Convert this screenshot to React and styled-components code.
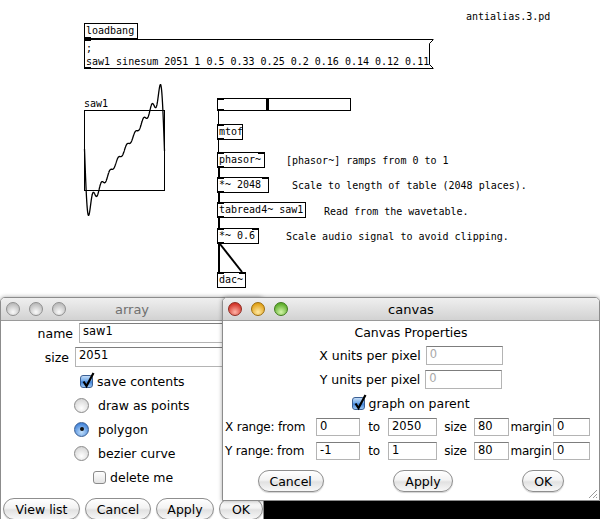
import React from "react";
import styled, { createGlobalStyle } from "styled-components";

const GlobalStyle = createGlobalStyle`
  html, body {
    margin: 0;
    padding: 0;
    background: #000;
  }
  body {
    width: 600px;
    height: 519px;
    overflow: hidden;
  }
`;

const Screen = styled.div`
  position: relative;
  width: 600px;
  height: 519px;
  overflow: hidden;
  background: #000;
`;

/* ---------- Pd patch canvas ---------- */

const Patch = styled.div`
  position: absolute;
  left: 0;
  top: 0;
  width: 600px;
  height: 501px;
  background: #fff;
  font-family: "DejaVu Sans Mono", "Liberation Mono", monospace;
  font-size: 10px;
  color: #000;
`;

const PdBox = styled.div`
  position: absolute;
  left: ${(p) => p.$x}px;
  top: ${(p) => p.$y}px;
  width: ${(p) => p.$w}px;
  height: ${(p) => p.$h || 16}px;
  box-sizing: border-box;
  border: 1px solid #000;
  background: #fff;
  padding-left: 1px;
  line-height: 14px;
  white-space: pre;
`;

const MsgBox = styled(PdBox)`
  border-right: none;
  padding-top: 3px;
  line-height: 12.5px;
`;

const Port = styled.span`
  position: absolute;
  width: 7px;
  height: 2px;
  background: #000;
  ${(p) => (p.$bottom ? "bottom: -1px;" : "top: -1px;")}
  ${(p) => (p.$right ? "right: -1px;" : "left: -1px;")}
`;

const Knob = styled.span`
  position: absolute;
  top: 0;
  bottom: 0;
  left: ${(p) => p.$at}px;
  width: 3px;
  background: #000;
`;

const PdText = styled.div`
  position: absolute;
  left: ${(p) => p.$x}px;
  top: ${(p) => p.$y}px;
  line-height: 14px;
  white-space: pre;
`;

const GraphBox = styled.div`
  position: absolute;
  left: 84px;
  top: 110px;
  width: 81px;
  height: 81px;
  box-sizing: border-box;
  border: 1px solid #000;
`;

const Overlay = styled.svg`
  position: absolute;
  left: 0;
  top: 0;
  pointer-events: none;
`;

/* ---------- Aqua dialog windows ---------- */

const Window = styled.div`
  position: absolute;
  left: ${(p) => p.$x}px;
  top: ${(p) => p.$y}px;
  width: ${(p) => p.$w}px;
  height: ${(p) => p.$h}px;
  box-sizing: border-box;
  display: flex;
  flex-direction: column;
  background: #fff;
  border: 1px solid #8c8c8c;
  border-radius: 5px 5px 0 0;
  overflow: hidden;
  box-shadow: 0 0 4px rgba(0, 0, 0, 0.35);
  font-family: "DejaVu Sans", Verdana, sans-serif;
  font-size: 12.5px;
  color: #000;
`;

const TitleBar = styled.div`
  position: relative;
  flex: none;
  height: 22px;
  display: flex;
  align-items: center;
  justify-content: center;
  background: linear-gradient(#efefef, #d2d2d2);
  border-bottom: 1px solid #9a9a9a;
  font-size: 13px;
  color: ${(p) => (p.$active ? "#000" : "#707070")};
`;

const Lights = styled.div`
  position: absolute;
  left: 5px;
  top: 4px;
  display: flex;
  gap: 9px;
`;

const lightColors = {
  off: ["#fafafa", "#bdbdbd", "#8f8f8f"],
  red: ["#ffb3a6", "#d3362b", "#8e2a20"],
  yellow: ["#ffe9a3", "#e1a21a", "#9a6c0c"],
  green: ["#d3f5a8", "#5fae2d", "#3f7a1c"],
};

const Light = styled.span`
  width: 14px;
  height: 14px;
  box-sizing: border-box;
  border-radius: 50%;
  border: 1px solid ${(p) => lightColors[p.$c][2]};
  background: radial-gradient(
    circle at 50% 75%,
    ${(p) => lightColors[p.$c][0]} 0%,
    ${(p) => lightColors[p.$c][1]} 75%
  );
`;

const Body = styled.div`
  flex: 1;
  display: flex;
  flex-direction: column;
`;

const FieldRow = styled.div`
  height: 24px;
  flex: none;
  display: flex;
  align-items: center;
  justify-content: ${(p) => (p.$center ? "center" : "flex-start")};
  gap: ${(p) => p.$gap ?? 6}px;
  padding-left: ${(p) => p.$indent || 0}px;
`;

const FieldLabel = styled.span`
  width: ${(p) => (p.$w ? `${p.$w}px` : "auto")};
  text-align: ${(p) => p.$align || "right"};
  flex: none;
  white-space: nowrap;
`;

const RangeLabel = styled(FieldLabel)`
  font-size: 12px;
  letter-spacing: -0.2px;
`;

const Entry = styled.div`
  width: ${(p) => p.$w}px;
  height: ${(p) => p.$h || 19}px;
  flex: none;
  box-sizing: border-box;
  border: 1px solid #b4b4b4;
  border-top-color: #7d7d7d;
  background: #fff;
  padding: 0 3px;
  font-size: 11.5px;
  line-height: 15px;
  color: ${(p) => (p.$disabled ? "#a8a8a8" : "#000")};
`;

const Check = styled.span`
  position: relative;
  width: 13px;
  height: 13px;
  flex: none;
  box-sizing: border-box;
  border-radius: 3px;
  border: 1px solid ${(p) => (p.$on ? "#3b5f93" : "#8a8a8a")};
  background: ${(p) =>
    p.$on
      ? "linear-gradient(#c3dcf7, #6aa5e8 48%, #3d80d8 52%, #9ac7f5)"
      : "linear-gradient(#ffffff, #e3e3e3)"};
  svg {
    position: absolute;
    left: 0;
    top: -4px;
  }
`;

const Radio = styled.span`
  position: relative;
  width: 15px;
  height: 15px;
  flex: none;
  box-sizing: border-box;
  border-radius: 50%;
  border: 1px solid ${(p) => (p.$on ? "#3b5f93" : "#8a8a8a")};
  background: ${(p) =>
    p.$on
      ? "radial-gradient(circle at 50% 70%, #c3e0fb, #3d80d8 80%)"
      : "radial-gradient(circle at 50% 70%, #ffffff, #d4d4d4 85%)"};
  &::after {
    content: "";
    display: ${(p) => (p.$on ? "block" : "none")};
    position: absolute;
    left: 4.5px;
    top: 4.5px;
    width: 4px;
    height: 4px;
    border-radius: 50%;
    background: #111;
  }
`;

const ButtonRow = styled.div`
  flex: none;
  display: flex;
  align-items: center;
  justify-content: ${(p) => p.$justify || "flex-start"};
  gap: ${(p) => p.$gap || 0}px;
  padding-left: ${(p) => p.$indent || 0}px;
  margin-top: ${(p) => p.$top || 0}px;
`;

const AquaButton = styled.button`
  width: ${(p) => p.$w}px;
  height: 22px;
  flex: none;
  box-sizing: border-box;
  padding: 0;
  border: 1px solid #8e8e8e;
  border-radius: 11px;
  background: linear-gradient(#ffffff 0%, #f3f3f3 45%, #e1e1e1 55%, #f8f8f8 100%);
  box-shadow: 0 1px 1px rgba(0, 0, 0, 0.18);
  font-family: "DejaVu Sans", Verdana, sans-serif;
  font-size: 12.5px;
  color: #000;
`;

const Heading = styled.div`
  height: 22px;
  flex: none;
  display: flex;
  align-items: center;
  justify-content: center;
`;

const Grip = styled.svg`
  position: absolute;
  right: 1px;
  bottom: 1px;
`;

/* ---------- data ---------- */

const coeffs = [1, 0.5, 0.33, 0.25, 0.2, 0.16, 0.14, 0.12, 0.11];

const wavePoints = Array.from({ length: 2051 }, (_, i) => {
  const t = (i - 1) / 2048;
  let f = 0;
  coeffs.forEach((a, k) => {
    f += a * Math.sin(2 * Math.PI * (k + 1) * t);
  });
  const x = 84.5 + (80 * i) / 2050;
  const y = 150 + 39 * f;
  return `${x.toFixed(2)},${y.toFixed(2)}`;
}).join(" ");

const CheckMark = () => (
  <svg width="15" height="17" viewBox="0 0 15 17">
    <path d="M2.5 9.5 L5.5 14 L12.5 1" fill="none" stroke="#000" strokeWidth="2.2" />
  </svg>
);

function PdPatch() {
  return (
    <Patch>
      <PdText $x={466} $y={10}>antialias.3.pd</PdText>

      <PdBox $x={84} $y={23} $w={54}>
        loadbang
        <Port $bottom />
      </PdBox>
      <MsgBox $x={84} $y={39} $w={349} $h={30}>
        {";\nsaw1 sinesum 2051 1 0.5 0.33 0.25 0.2 0.16 0.14 0.12 0.11"}
        <Port />
        <Port $bottom />
      </MsgBox>

      <PdText $x={84} $y={97}>saw1</PdText>
      <GraphBox />

      <PdBox $x={217} $y={98} $w={134} $h={13}>
        <Port />
        <Port $bottom />
        <Knob $at={48} />
      </PdBox>
      <PdBox $x={217} $y={124} $w={26}>
        mtof
        <Port />
        <Port $bottom />
      </PdBox>
      <PdBox $x={217} $y={152} $w={48}>
        phasor~
        <Port />
        <Port $right />
        <Port $bottom />
      </PdBox>
      <PdBox $x={217} $y={177} $w={52}>
        *~ 2048
        <Port />
        <Port $right />
        <Port $bottom />
      </PdBox>
      <PdBox $x={217} $y={202} $w={89}>
        tabread4~ saw1
        <Port />
        <Port $bottom />
      </PdBox>
      <PdBox $x={217} $y={228} $w={42}>
        *~ 0.6
        <Port />
        <Port $right />
        <Port $bottom />
      </PdBox>
      <PdBox $x={217} $y={272} $w={29}>
        dac~
        <Port />
        <Port $right />
      </PdBox>

      <PdText $x={286} $y={154}>[phasor~] ramps from 0 to 1</PdText>
      <PdText $x={292} $y={179}>Scale to length of table (2048 places).</PdText>
      <PdText $x={324} $y={205}>Read from the wavetable.</PdText>
      <PdText $x={286} $y={230}>Scale audio signal to avoid clipping.</PdText>

      <Overlay width="600" height="501">
        <path
          d="M433.5 39.5 L429.5 43.5 V64.5 L433.5 68.5"
          fill="none"
          stroke="#000"
          strokeWidth="1"
        />
        <line x1="218.5" y1="111" x2="218.5" y2="124" stroke="#000" strokeWidth="1" />
        <line x1="218.5" y1="140" x2="218.5" y2="152" stroke="#000" strokeWidth="1" />
        <line x1="219" y1="168" x2="219" y2="177" stroke="#000" strokeWidth="2" />
        <line x1="219" y1="193" x2="219" y2="202" stroke="#000" strokeWidth="2" />
        <line x1="219" y1="218" x2="219" y2="228" stroke="#000" strokeWidth="2" />
        <line x1="219" y1="244" x2="219" y2="272" stroke="#000" strokeWidth="2" />
        <line x1="220" y1="244" x2="242" y2="272" stroke="#000" strokeWidth="2" />
        <polyline points={wavePoints} fill="none" stroke="#000" strokeWidth="1.3" />
      </Overlay>
    </Patch>
  );
}

function ArrayDialog() {
  return (
    <Window $x={0} $y={297} $w={264} $h={232}>
      <TitleBar>
        <Lights>
          <Light $c="off" />
          <Light $c="off" />
          <Light $c="off" />
        </Lights>
        array
      </TitleBar>
      <Body>
        <FieldRow>
          <FieldLabel $w={72}>name</FieldLabel>
          <Entry $w={200} $h={20}>saw1</Entry>
        </FieldRow>
        <FieldRow>
          <FieldLabel $w={68}>size</FieldLabel>
          <Entry $w={200} $h={20}>2051</Entry>
        </FieldRow>
        <FieldRow $indent={79} $gap={4}>
          <Check $on>
            <CheckMark />
          </Check>
          <span>save contents</span>
        </FieldRow>
        <FieldRow $indent={73} $gap={9}>
          <Radio />
          <span>draw as points</span>
        </FieldRow>
        <FieldRow $indent={73} $gap={9}>
          <Radio $on />
          <span>polygon</span>
        </FieldRow>
        <FieldRow $indent={73} $gap={9}>
          <Radio />
          <span>bezier curve</span>
        </FieldRow>
        <FieldRow $indent={92} $gap={4}>
          <Check />
          <span>delete me</span>
        </FieldRow>
        <ButtonRow $indent={2} $gap={5} $top={9}>
          <AquaButton $w={77}>View list</AquaButton>
          <AquaButton $w={66}>Cancel</AquaButton>
          <AquaButton $w={58}>Apply</AquaButton>
          <AquaButton $w={44}>OK</AquaButton>
        </ButtonRow>
      </Body>
    </Window>
  );
}

function RangeRow({ axis, from, to }) {
  return (
    <FieldRow $indent={2} $gap={0}>
      <RangeLabel $w={91} $align="left">{axis} range: from</RangeLabel>
      <Entry $w={44} $h={18}>{from}</Entry>
      <RangeLabel $w={28} $align="center">to</RangeLabel>
      <Entry $w={49} $h={18}>{to}</Entry>
      <RangeLabel $w={37} $align="center">size</RangeLabel>
      <Entry $w={35} $h={18}>80</Entry>
      <RangeLabel $w={44} $align="center">margin</RangeLabel>
      <Entry $w={37} $h={18}>0</Entry>
    </FieldRow>
  );
}

function CanvasDialog() {
  return (
    <Window $x={222} $y={297} $w={378} $h={204}>
      <TitleBar $active>
        <Lights>
          <Light $c="red" />
          <Light $c="yellow" />
          <Light $c="green" />
        </Lights>
        canvas
      </TitleBar>
      <Body>
        <Heading>Canvas Properties</Heading>
        <FieldRow $center $gap={5}>
          <FieldLabel>X units per pixel</FieldLabel>
          <Entry $w={77} $disabled>0</Entry>
        </FieldRow>
        <FieldRow $center $gap={5}>
          <FieldLabel>Y units per pixel</FieldLabel>
          <Entry $w={77} $disabled>0</Entry>
        </FieldRow>
        <FieldRow $center $gap={3}>
          <Check $on>
            <CheckMark />
          </Check>
          <span>graph on parent</span>
        </FieldRow>
        <RangeRow axis="X" from="0" to="2050" />
        <RangeRow axis="Y" from="-1" to="1" />
        <ButtonRow $justify="space-around" $top={7}>
          <AquaButton $w={66}>Cancel</AquaButton>
          <AquaButton $w={60}>Apply</AquaButton>
          <AquaButton $w={42}>OK</AquaButton>
        </ButtonRow>
      </Body>
      <Grip width="11" height="11" viewBox="0 0 11 11">
        <path d="M10 2 L2 10 M10 6 L6 10 M10 9 L9 10" stroke="#9a9a9a" strokeWidth="1" />
      </Grip>
    </Window>
  );
}

export default function App() {
  return (
    <>
      <GlobalStyle />
      <Screen>
        <PdPatch />
        <ArrayDialog />
        <CanvasDialog />
      </Screen>
    </>
  );
}
